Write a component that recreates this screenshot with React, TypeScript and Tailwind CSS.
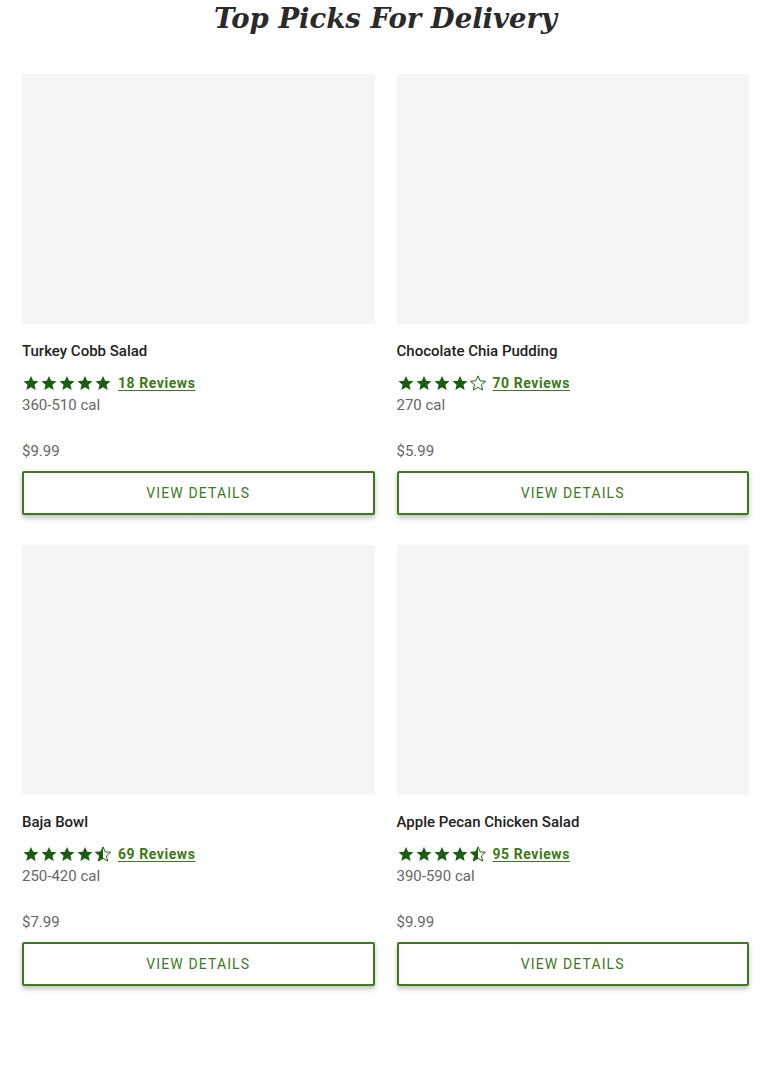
import React from 'react';

type Pick = {
    name: string;
    rating: number;
    reviews: number;
    cal: string;
    price: string;
};

const picks: Pick[] = [
    { name: 'Turkey Cobb Salad', rating: 5, reviews: 18, cal: '360-510 cal', price: '$9.99' },
    { name: 'Chocolate Chia Pudding', rating: 4, reviews: 70, cal: '270 cal', price: '$5.99' },
    { name: 'Baja Bowl', rating: 4.5, reviews: 69, cal: '250-420 cal', price: '$7.99' },
    { name: 'Apple Pecan Chicken Salad', rating: 4.5, reviews: 95, cal: '390-590 cal', price: '$9.99' },
];

const STAR = 'M12 2.5l2.9 6.6 7.1.6-5.4 4.7 1.6 7-6.2-3.7-6.2 3.7 1.6-7L2 9.7l7.1-.6z';

const Star = ({ kind }: { kind: 'full' | 'half' | 'empty' }) => (
    <svg viewBox="0 0 24 24" className="w-[18px] h-[18px]">
        <defs>
            <clipPath id="half-left">
                <rect x="0" y="0" width="12" height="24" />
            </clipPath>
        </defs>
        {kind === 'full' && <path d={STAR} fill="#1a5e12" />}
        {kind === 'empty' && <path d={STAR} fill="none" stroke="#1a5e12" strokeWidth="1.3" strokeLinejoin="round" />}
        {kind === 'half' && (
            <>
                <path d={STAR} fill="none" stroke="#1a5e12" strokeWidth="1.3" strokeLinejoin="round" />
                <path d={STAR} fill="#1a5e12" clipPath="url(#half-left)" />
            </>
        )}
    </svg>
);

const Stars = ({ rating }: { rating: number }) => {
    const stars = [0, 1, 2, 3, 4].map((i) => {
        if (rating >= i + 1) return 'full';
        if (rating >= i + 0.5) return 'half';
        return 'empty';
    }) as ('full' | 'half' | 'empty')[];
    return (
        <div className="flex items-center">
            {stars.map((k, i) => <Star key={i} kind={k} />)}
        </div>
    );
};

const PickCard = ({ pick }: { pick: Pick }) => (
    <div className="flex flex-col">
        <div className="h-[250px] bg-[#f5f5f5]" />
        <h3 className="mt-[18px] text-[15px] leading-[18px] font-medium text-[#222]">{pick.name}</h3>
        <div className="mt-[13px] flex items-center gap-[6px] h-[20px]">
            <Stars rating={pick.rating} />
            <a href="#" className="text-[14px] font-bold tracking-[0.04em] text-[#3d7a17] underline underline-offset-2">
                {pick.reviews} Reviews
            </a>
        </div>
        <p className="mt-[2px] text-[15px] leading-[20px] text-[#666]">{pick.cal}</p>
        <p className="mt-[26px] text-[15px] leading-[20px] text-[#666]">{pick.price}</p>
        <button className="mt-[10px] h-[44px] border-2 border-[#3c7a1e] rounded-[2px] bg-white text-[14px] tracking-[0.08em] text-[#3c7a1e] shadow-[0_3px_5px_rgba(0,0,0,0.25)]">
            VIEW DETAILS
        </button>
    </div>
);

export default function App() {
    return (
        <div className="min-h-[1088px] bg-white font-['Roboto',sans-serif]">
            <h2 className="text-center font-['DejaVu_Serif',serif] italic font-bold text-[27.5px] leading-[36px] text-[#2a2a2a]">
                Top Picks For Delivery
            </h2>
            <div className="mt-[38px] px-[22px] grid grid-cols-2 gap-x-[22px] gap-y-[30px]">
                {picks.map((p) => <PickCard key={p.name} pick={p} />)}
            </div>
        </div>
    );
}
